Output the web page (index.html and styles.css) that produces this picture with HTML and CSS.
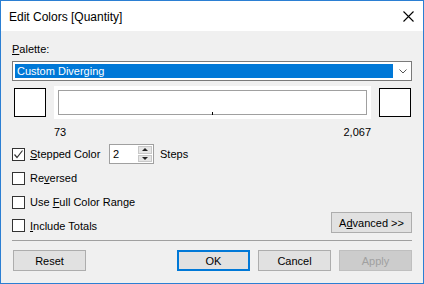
FILE: index.html
```html
<!DOCTYPE html>
<html>
<head>
    <title>Edit Colors [Quantity]</title>
    <meta charset="utf-8" />
    <link rel="stylesheet" href="styles.css">
</head>
<body>
    <div class="window">
        <div class="titlebar">
            <span class="title">Edit Colors [Quantity]</span>
            <svg class="close" width="11" height="11" viewBox="0 0 11 11">
                <path d="M0.5 0.5 L10.5 10.5 M10.5 0.5 L0.5 10.5" stroke="#000" stroke-width="1.1" fill="none"/>
            </svg>
        </div>
        <div class="content">
            <div class="label"><u>P</u>alette:</div>
            <div class="combo">
                <div class="combo-text">Custom Diverging</div>
                <div class="combo-arrow">
                    <svg width="8" height="5" viewBox="0 0 8 5">
                        <polyline points="0.5,0.5 4,4 7.5,0.5" stroke="#555" fill="none" stroke-width="1"/>
                    </svg>
                </div>
            </div>

            <div class="preview">
                <div class="swatch"></div>
                <div class="ramp-area">
                    <div class="ramp">
                        <span class="tick"></span>
                    </div>
                </div>
                <div class="swatch"></div>
            </div>
            <div class="range">
                <span>73</span>
                <span>2,067</span>
            </div>

            <div class="row row-stepped">
                <span class="check checked">
                    <svg width="11" height="11" viewBox="0 0 11 11">
                        <polyline points="1.5,5.5 4,8.5 9.5,1.5" stroke="#333" fill="none" stroke-width="1.2"/>
                    </svg>
                </span>
                <span class="check-label"><u>S</u>tepped Color</span>
                <div class="spin">
                    <span class="spin-value">2</span>
                    <div class="spin-buttons">
                        <span class="spin-btn"><i class="tri-up"></i></span>
                        <span class="spin-btn"><i class="tri-down"></i></span>
                    </div>
                </div>
                <span class="steps">Steps</span>
            </div>
            <div class="row">
                <span class="check"></span>
                <span class="check-label">Re<u>v</u>ersed</span>
            </div>
            <div class="row">
                <span class="check"></span>
                <span class="check-label">Use <u>F</u>ull Color Range</span>
            </div>
            <div class="row row-last">
                <div class="row-left">
                    <span class="check"></span>
                    <span class="check-label"><u>I</u>nclude Totals</span>
                </div>
                <button class="btn btn-advanced">A<u>d</u>vanced &gt;&gt;</button>
            </div>

            <div class="separator"></div>

            <div class="buttons">
                <button class="btn">Reset</button>
                <div class="buttons-right">
                    <button class="btn btn-default">OK</button>
                    <button class="btn">Cancel</button>
                    <button class="btn btn-disabled">Apply</button>
                </div>
            </div>
        </div>
    </div>
</body>
</html>
```

FILE: styles.css
```css
html, body {
    margin: 0;
    padding: 0;
}

body {
    font-family: "Liberation Sans", Arial, sans-serif;
    font-size: 11px;
    color: #000;
}

.window {
    width: 424px;
    height: 284px;
    box-sizing: border-box;
    border: 1px solid #2b7fd3;
    background: #f0f0f0;
}

.titlebar {
    height: 30px;
    background: #fff;
    display: flex;
    align-items: center;
    justify-content: space-between;
    padding: 0 9px 0 8px;
}

.title {
    font-size: 12px;
    margin-top: 1px;
}

.close {
    display: block;
}

.content {
    padding: 0 11px;
}

.label {
    margin-top: 11px;
    height: 15px;
    line-height: 15px;
}

/* fake combo box */
.combo {
    margin-top: 4px;
    height: 20px;
    box-sizing: border-box;
    border: 1px solid #7a7a7a;
    background: #fff;
    display: flex;
    padding: 2px 0 2px 2px;
}

.combo-text {
    flex: 1;
    background: #0078d7;
    color: #fff;
    line-height: 14px;
    padding-left: 2px;
}

.combo-arrow {
    width: 17px;
    display: flex;
    align-items: center;
    justify-content: center;
    padding-left: 1px;
}

.combo-arrow svg {
    display: block;
}

.preview {
    margin-top: 5px;
    display: flex;
    gap: 8px;
    padding: 0 1px 0 2px;
}

.swatch {
    width: 32px;
    height: 29px;
    box-sizing: border-box;
    border: 1px solid #000;
    background: #fff;
    margin-top: 2px;
}

.ramp-area {
    flex: 1;
    height: 33px;
    background: #fff;
    padding: 4px;
    box-sizing: border-box;
}

.ramp {
    position: relative;
    height: 25px;
    box-sizing: border-box;
    border: 1px solid #a0a0a0;
}

.tick {
    position: absolute;
    left: 153px;
    bottom: -1px;
    width: 1px;
    height: 3px;
    background: #000;
}

.range {
    margin-top: 6px;
    height: 15px;
    line-height: 15px;
    display: flex;
    justify-content: space-between;
    padding: 0 41px 0 42px;
}

.row {
    display: flex;
    align-items: center;
    height: 20px;
    margin-top: 4px;
}

.check {
    width: 13px;
    height: 13px;
    box-sizing: border-box;
    border: 1px solid #333;
    background: #fff;
    display: inline-flex;
    align-items: center;
    justify-content: center;
}

.check.checked {
    border-color: #333;
}

.check svg {
    display: block;
}

.check-label {
    margin-left: 5px;
}

.row-stepped .check-label {
    width: 79px;
}

.spin {
    width: 45px;
    height: 20px;
    box-sizing: border-box;
    border: 1px solid #a0a0a0;
    background: #fff;
    display: flex;
    align-items: center;
    padding-left: 3px;
}

.spin-value {
    flex: 1;
}

.spin-buttons {
    width: 14px;
    height: 16px;
    margin-right: 1px;
    display: flex;
    flex-direction: column;
    gap: 1px;
}

.spin-btn {
    flex: 1;
    background: #e6e6e6;
    border: 1px solid #c8c8c8;
    display: flex;
    align-items: center;
    justify-content: center;
}

.tri-up {
    border-left: 3px solid transparent;
    border-right: 3px solid transparent;
    border-bottom: 3px solid #222;
}

.tri-down {
    border-left: 3px solid transparent;
    border-right: 3px solid transparent;
    border-top: 3px solid #222;
}

.steps {
    margin-left: 6px;
}

.row-last {
    height: 21px;
    margin-top: 0;
    justify-content: space-between;
    align-items: flex-end;
}

.row-left {
    display: flex;
    align-items: center;
    margin-bottom: 1px;
}

.btn {
    font-family: inherit;
    font-size: 11px;
    color: #000;
    width: 73px;
    height: 21px;
    box-sizing: border-box;
    border: 1px solid #adadad;
    background: #e1e1e1;
    padding: 0;
    margin: 0;
}

.btn-advanced {
    width: 81px;
}

.btn-default {
    border: 2px solid #0078d7;
}

.btn-disabled {
    background: #cccccc;
    border-color: #bfbfbf;
    color: #a0a0a0;
}

.separator {
    margin-top: 7px;
    height: 1px;
    background: #a0a0a0;
}

.buttons {
    margin-top: 9px;
    display: flex;
    justify-content: space-between;
    padding-left: 1px;
}

.buttons-right {
    display: flex;
    gap: 8px;
}
```
